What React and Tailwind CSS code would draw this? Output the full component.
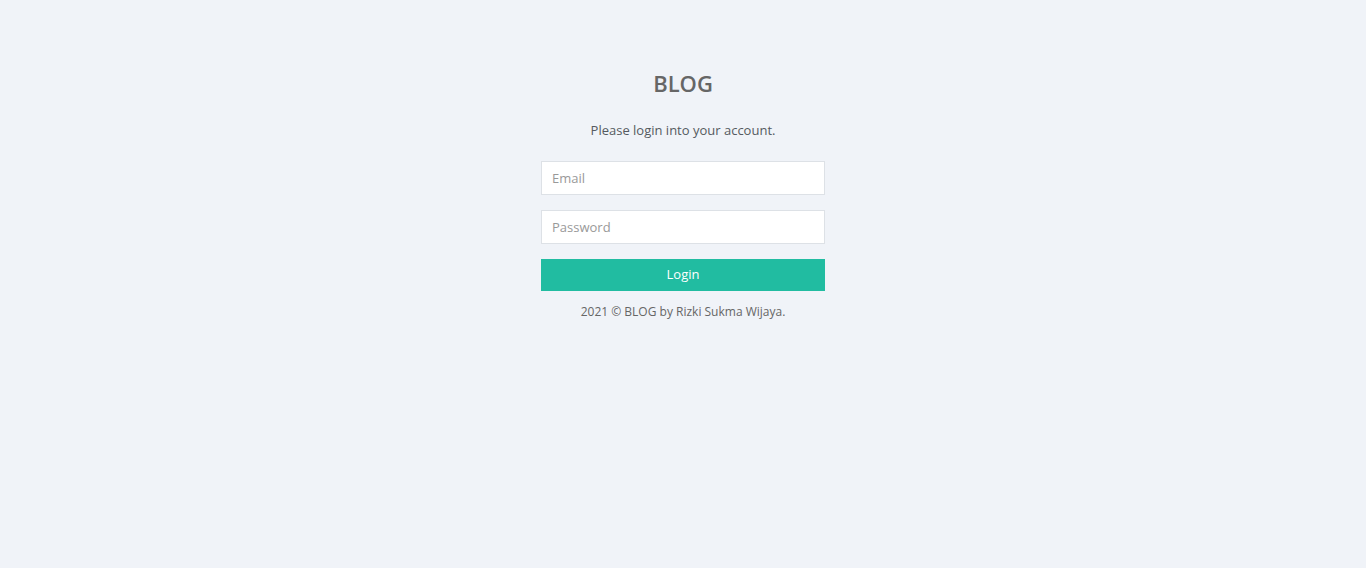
export default function App() {
  return (
    <div className="min-h-[568px] bg-[#f0f3f8] font-['Open_Sans',sans-serif]">
      <div className="mx-auto w-[284px] pt-[68px] text-center">
        <h1 className="text-[22px] font-semibold leading-[30px] text-[#666666]">BLOG</h1>
        <p className="mt-[23px] text-[13px] leading-[18px] text-[#555a60]">Please login into your account.</p>
        <form className="mt-[22px]" onSubmit={(e) => e.preventDefault()}>
          <input
            type="email"
            placeholder="Email"
            className="block h-[34px] w-full border border-[#dde1e6] bg-white px-[10px] text-[13px] text-[#555] outline-none placeholder:text-[#999]"
          />
          <input
            type="password"
            placeholder="Password"
            className="mt-[15px] block h-[34px] w-full border border-[#dde1e6] bg-white px-[10px] text-[13px] text-[#555] outline-none placeholder:text-[#999]"
          />
          <button
            type="submit"
            className="mt-[15px] block h-[32px] w-full bg-[#21bca1] text-[13px] text-white"
          >
            Login
          </button>
        </form>
        <p className="mt-[12px] text-[12px] leading-[17px] text-[#666666]">2021 © BLOG by Rizki Sukma Wijaya.</p>
      </div>
    </div>
  );
}
